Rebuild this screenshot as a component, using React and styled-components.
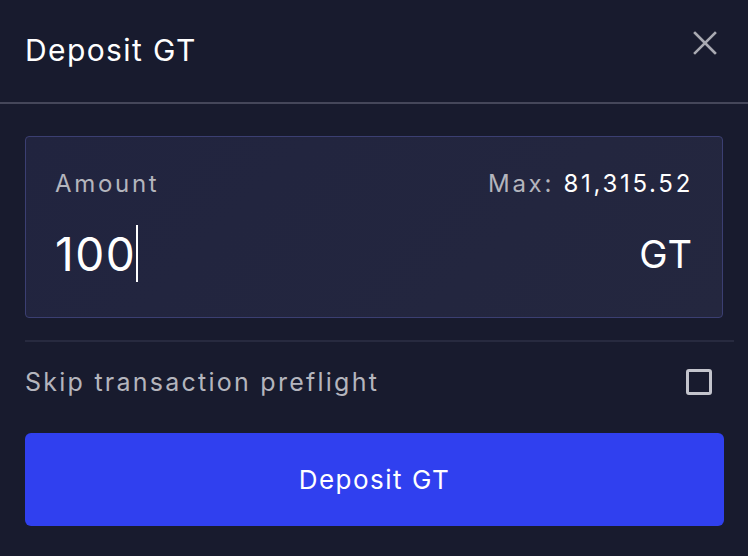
import React from "react"
import styled, { createGlobalStyle } from "styled-components"

const Global = createGlobalStyle`
  html, body {
    margin: 0;
    padding: 0;
    background: #181b2e;
  }
  body {
    font-family: Inter, "Liberation Sans", sans-serif;
  }
`;

const Modal = styled.div`
  width: 748px;
  height: 556px;
  background: #181b2e;
  display: flex;
  flex-direction: column;
`;

const Header = styled.div`
  display: flex;
  align-items: center;
  justify-content: space-between;
  padding: 0 30px 0 25px;
  border-bottom: 2px solid #45475a;
  box-sizing: border-box;
  height: 104px;
`;

const Title = styled.h1`
  margin: 0 0 2px;
  font-size: 30px;
  font-weight: 400;
  color: #fff;
  letter-spacing: 1.4px;
`;

const Close = styled.button`
  background: none;
  border: none;
  padding: 0;
  width: 26px;
  height: 26px;
  margin-bottom: 16px;
  display: flex;
  align-items: center;
  justify-content: center;
  cursor: pointer;
`;

const Body = styled.div`
  padding: 32px 14px 0 25px;
  display: flex;
  flex-direction: column;
`;

const AmountCard = styled.div`
  margin-right: 11px;
  height: 182px;
  box-sizing: border-box;
  background: linear-gradient(135deg, #21243f, #24273f);
  border: 1px solid #3b3f72;
  border-radius: 4px;
  padding: 32px 29px 0 29px;
  display: flex;
  flex-direction: column;
`;

const Row = styled.div`
  display: flex;
  justify-content: space-between;
  align-items: ${p => p.$align || "center"};
`;

const Label = styled.span`
  font-size: 24px;
  color: #b4b5bd;
  letter-spacing: 2.7px;
`;

const MaxValue = styled.span`
  color: #fff;
`;

const AmountValue = styled.div`
  margin-top: 27px;
  display: flex;
  align-items: center;
  font-size: 46px;
  color: #fff;
  height: 57px;
  letter-spacing: 1.5px;
`;

const Caret = styled.span`
  display: inline-block;
  width: 2px;
  height: 57px;
  background: #fff;
`;

const Unit = styled.span`
  font-size: 38px;
  color: #fff;
  margin-top: 33px;
  letter-spacing: 1px;
`;

const Divider = styled.div`
  height: 2px;
  background: #272a3f;
  margin-top: 22px;
`;

const OptionRow = styled.label`
  display: flex;
  justify-content: space-between;
  align-items: center;
  height: 80px;
  padding-right: 22px;
  padding-bottom: 2px;
`;

const OptionText = styled.span`
  font-size: 25px;
  color: #b4b5bd;
  letter-spacing: 2.25px;
`;

const Checkbox = styled.span`
  width: 26px;
  height: 26px;
  box-sizing: border-box;
  border: 3px solid #c3c4cc;
  border-radius: 3px;
`;

const Submit = styled.button`
  margin-top: 9px;
  margin-right: 10px;
  height: 93px;
  border: none;
  border-radius: 6px;
  background: #3040ef;
  color: #fff;
  font-family: inherit;
  font-size: 26px;
  letter-spacing: 1.5px;
  cursor: pointer;
`;

const XIcon = () => (
  <svg width="26" height="26" viewBox="0 0 26 26" fill="none" stroke="#a9aab2" strokeWidth="2.6" strokeLinecap="square">
    <path d="M3 3 L23 23 M23 3 L3 23" />
  </svg>
)

export default function App() {
  return (
    <Modal>
      <Global />
      <Header>
        <Title>Deposit GT</Title>
        <Close aria-label="Close"><XIcon /></Close>
      </Header>
      <Body>
        <AmountCard>
          <Row>
            <Label>Amount</Label>
            <Label>Max: <MaxValue>81,315.52</MaxValue></Label>
          </Row>
          <Row $align="flex-start">
            <AmountValue>100<Caret /></AmountValue>
            <Unit>GT</Unit>
          </Row>
        </AmountCard>
        <Divider />
        <OptionRow>
          <OptionText>Skip transaction preflight</OptionText>
          <Checkbox />
        </OptionRow>
        <Submit>Deposit GT</Submit>
      </Body>
    </Modal>
  )
}
